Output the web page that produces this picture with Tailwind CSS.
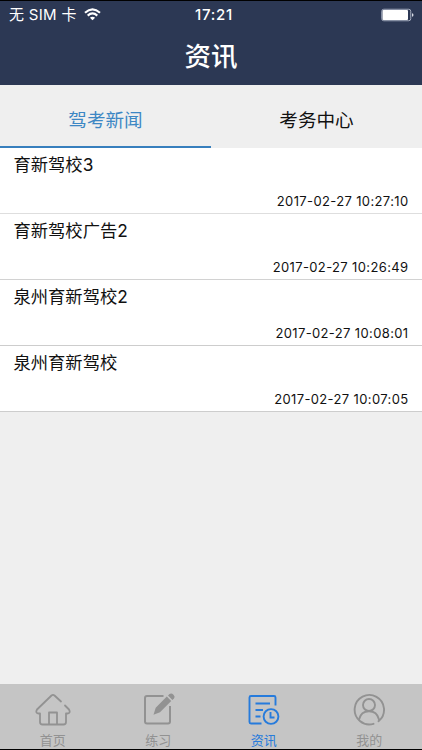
<!DOCTYPE html>
<html lang="zh-CN">
<head>
<meta charset="utf-8">
<meta name="viewport" content="width=device-width, initial-scale=1">
<title>资讯</title>
<script src="https://cdn.jsdelivr.net/npm/@tailwindcss/browser@4"></script>
</head>
<body class="bg-[#efefef]">
<div class="flex h-[750px] w-[422px] flex-col overflow-hidden border-y border-black bg-[#efefef] font-['Inter','Noto_Sans_CJK_SC',sans-serif] text-[#111]">
  <header class="h-[84px] shrink-0 bg-[#2c3854] text-white">
    <div class="grid h-[28px] grid-cols-3 items-center pt-px pl-[9px] pr-[8px]">
      <div class="flex items-center gap-[7px] text-[15px] whitespace-nowrap">
        <span class="tracking-[0.3px]">无 SIM 卡</span>
        <svg class="-mt-[2px] h-[13px] w-[17px]" viewBox="0 0 17 13" fill="none" stroke="#fff" stroke-width="2.1"><path d="M1 4.8Q8.5-2 16 4.8M3.7 7.6Q8.500 3.300 13.300 7.600"/><path d="M5.900 9.700Q8.500 7.600 11.100 9.700L8.500 12.300Z" fill="#fff" stroke="none"/></svg>
      </div>
      <div class="pl-[5px] text-center text-[15px] font-medium tracking-[0.75px]">17:21</div>
      <svg class="-mt-[2px] h-[14px] w-[33px] justify-self-end" viewBox="0 0 33 14"><rect x=".75" y="1.250" width="29" height="11.500" rx="2" fill="none" stroke="#a4acbe"/><rect x="1.500" y="2" width="25.500" height="10" rx="1" fill="#fff"/><path d="M31 5.200q1.500 0 1.500 1.800t-1.500 1.800z" fill="#d8dce5"/></svg>
    </div>
    <h1 class="text-center text-[26.500px] leading-[55px] font-medium">资讯</h1>
  </header>
  <nav class="grid h-[63px] shrink-0 grid-cols-2 text-center text-[18.600px] leading-[70px]">
    <div class="h-[63px] border-b-[2px] border-[#377fbd] text-[#3d87c4]">驾考新闻</div>
    <div class="h-[63px]">考务中心</div>
  </nav>
  <main class="grow">
    <article class="flex h-[66px] flex-col justify-between border-b border-[#dedede] bg-white px-[13.500px] pt-[5px] pb-[3px]">
      <h2 class="text-[17.300px] leading-[24px]">育新驾校3</h2>
      <time class="self-end text-[13px] leading-[18px] tracking-[0.37px]">2017-02-27 10:27:10</time>
    </article>
    <article class="flex h-[66px] flex-col justify-between border-b border-[#d2d2d2] bg-white px-[13.500px] pt-[5px] pb-[3px]">
      <h2 class="text-[17.300px] leading-[24px]">育新驾校广告2</h2>
      <time class="self-end text-[13px] leading-[18px] tracking-[0.37px]">2017-02-27 10:26:49</time>
    </article>
    <article class="flex h-[66px] flex-col justify-between border-b border-[#cdcdcd] bg-white px-[13.500px] pt-[5px] pb-[3px]">
      <h2 class="text-[17.300px] leading-[24px]">泉州育新驾校2</h2>
      <time class="self-end text-[13px] leading-[18px] tracking-[0.37px]">2017-02-27 10:08:01</time>
    </article>
    <article class="flex h-[66px] flex-col justify-between border-b border-[#cdcdcd] bg-white px-[13.500px] pt-[5px] pb-[3px]">
      <h2 class="text-[17.300px] leading-[24px]">泉州育新驾校</h2>
      <time class="self-end text-[13px] leading-[18px] tracking-[0.37px]">2017-02-27 10:07:05</time>
    </article>
  </main>
  <footer class="grid h-[65px] shrink-0 grid-cols-4 bg-[#c5c5c5] pt-[8px] text-[13px] text-[#929292]">
    <div class="flex flex-col items-center">
      <svg class="h-[36px] w-[38px]" viewBox="0 0 38 36" fill="none" stroke="currentColor" stroke-width="1.800" stroke-linecap="round" stroke-linejoin="round"><path d="M27 9.500L20.500 3.500Q19 2.300 17.500 3.500L3 17.500Q1 21 4.500 21.500H6V30Q6 32.500 8.500 32.500H29.500Q32 32.500 32 30V21.500H33.500Q37 21 35 17.500L31 13.500M15 32V20.500H23V32"/></svg>
      <span class="leading-[25px]">首页</span>
    </div>
    <div class="flex flex-col items-center">
      <svg class="h-[36px] w-[38px]" viewBox="-1 0 38 36"><path d="M23.500 4H7Q5 4 5 6V29.500Q5 31.500 7 31.500H28Q30 31.500 30 29.500V14" fill="none" stroke="currentColor" stroke-width="2"/><path d="M13.500 22.700L15.700 15.700L26.800 4.600L31.200 9L20 20.200ZM28 3.400L29.500 2Q31.500.7 33.500 2.700Q35.500 4.800 34 6.400L32.400 7.900Z" fill="currentColor"/></svg>
      <span class="leading-[25px]">练习</span>
    </div>
    <div class="flex flex-col items-center text-[#267bdc]">
      <svg class="h-[36px] w-[38px]" viewBox="0 0 38 36" fill="none" stroke="currentColor" stroke-width="1.900"><path d="M16.500 31.500H6Q4.500 31.500 4.500 30V5.500Q4.500 4 6 4H29Q30.500 4 30.500 5.500V13.500M10.500 11.500H25M10.500 18H18M10.500 24.500H15.500"/><circle cx="26" cy="24.500" r="7.400"/><path d="M25.500 20V25.500H29.500"/></svg>
      <span class="leading-[25px]">资讯</span>
    </div>
    <div class="flex flex-col items-center">
      <svg class="h-[36px] w-[38px]" viewBox="0 0 38 36" fill="none" stroke="currentColor" stroke-width="1.900" stroke-linecap="round"><path d="M23.500 31.800A14.700 14.700 0 1 1 28.500 29.200"/><circle cx="19" cy="13" r="6"/><path d="M9 27.500Q11 19.300 19 19.300T29 27.500"/></svg>
      <span class="leading-[25px]">我的</span>
    </div>
  </footer>
</div>
</body>
</html>
